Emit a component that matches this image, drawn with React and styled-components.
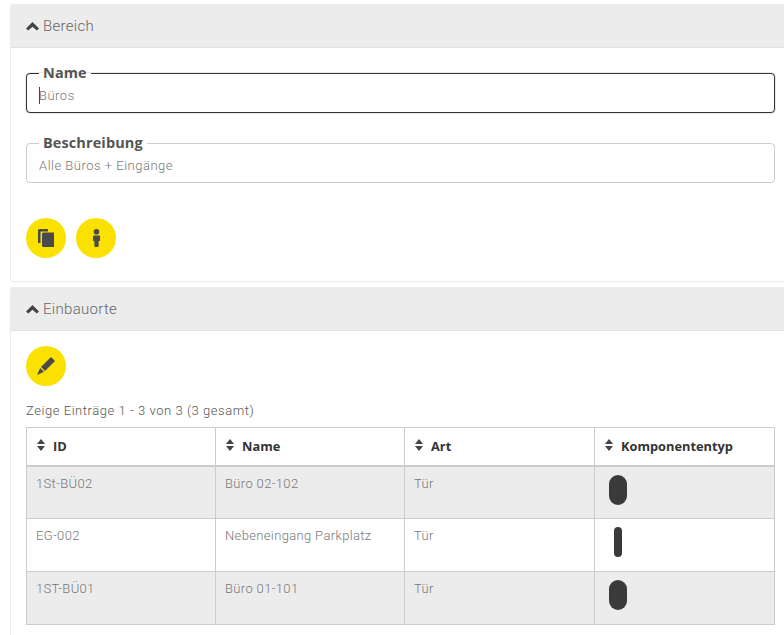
import React from 'react';
import styled, { createGlobalStyle } from 'styled-components';

const GlobalStyle = createGlobalStyle`
  html, body {
    margin: 0;
    padding: 0;
    background: #fff;
    overflow: hidden;
  }
  body {
    font-family: 'Roboto', 'Liberation Sans', sans-serif;
    font-weight: 300;
    color: #555;
  }
`;

const Page = styled.div`
  display: flex;
  flex-direction: column;
  gap: 5px;
  padding: 4px 0 0 10px;
  height: 631px;
  overflow: hidden;
`;

const Panel = styled.section`
  border: 1px solid #ececec;
  border-right: none;
  border-radius: 3px 0 0 3px;
  flex: none;
`;

const PanelHeader = styled.header`
  display: flex;
  align-items: center;
  gap: 4px;
  height: 43px;
  box-sizing: border-box;
  padding-left: 15px;
  background: #ececec;
  border-bottom: 1px solid #e0e0e0;
  font-size: 15px;
  letter-spacing: 0.3px;
  color: #666;
`;

const PanelBody = styled.div`
  padding: ${(props) => props.padding};
`;

const Field = styled.fieldset`
  margin: 0 0 ${(props) => props.bottom || 0}px;
  padding: 0 12px;
  height: 47px;
  box-sizing: border-box;
  border: 1px solid ${(props) => (props.focused ? '#333' : '#ccc')};
  border-radius: 4px;
  box-shadow: ${(props) => (props.focused ? '0 0 1px #333' : 'none')};
  display: flex;
  align-items: center;
`;

const Legend = styled.legend`
  margin-left: 0;
  padding: 0 4px;
  font-family: 'Open Sans', sans-serif;
  font-weight: 700;
  font-size: 14.5px;
  line-height: 14px;
  letter-spacing: 0.1px;
  color: #555;
`;

const Value = styled.span`
  position: relative;
  top: -1px;
  font-size: 13px;
  letter-spacing: 0.5px;
  color: #777;
`;

const Caret = styled.span`
  position: absolute;
  left: 0;
  top: -1px;
  width: 1px;
  height: 17px;
  background: #444;
`;

const ButtonRow = styled.div`
  display: flex;
  gap: 10px;
`;

const RoundButton = styled.button`
  display: flex;
  align-items: center;
  justify-content: center;
  width: 40px;
  height: 40px;
  padding: 0;
  border: none;
  border-radius: 50%;
  background: #fae100;
  color: #4a4a4a;
`;

const Summary = styled.div`
  margin: 17px 0 8px;
  font-size: 13px;
  line-height: 16px;
  letter-spacing: 0.55px;
  color: #555;
`;

const Table = styled.table`
  width: 748px;
  border-collapse: collapse;
  table-layout: fixed;
`;

const HeadCell = styled.th`
  height: 38px;
  padding: 0 10px;
  box-sizing: border-box;
  border: 1px solid #ccc;
  border-bottom: 2px solid #ccc;
  text-align: left;
  font-family: 'Open Sans', sans-serif;
  font-weight: 700;
  font-size: 12.8px;
  color: #333;
`;

const HeadInner = styled.span`
  display: flex;
  align-items: center;
  gap: 8px;

  svg {
    margin-top: -3px;
  }
`;

const Row = styled.tr`
  background: ${(props) => (props.striped ? '#ececec' : '#fff')};
`;

const Cell = styled.td`
  height: 53px;
  padding: 8px 9px 0;
  box-sizing: border-box;
  border: 1px solid #ccc;
  vertical-align: top;
  font-size: 13px;
  line-height: 18px;
  letter-spacing: 0.35px;
  color: #777;
`;

const Knob = styled.div`
  width: ${(props) => (props.slim ? 8 : 18)}px;
  height: 30px;
  margin-left: ${(props) => (props.slim ? 10 : 5)}px;
  border-radius: ${(props) => (props.slim ? 4 : 9)}px;
  background: #3a3a3a;
`;

const Chevron = () => (
  <svg width="13" height="9" viewBox="0 0 13 9">
    <path d="M6.5 0 L13 6.4 L10.8 8.6 L6.5 4.8 L2.2 8.6 L0 6.4 Z" fill="#444" />
  </svg>
);

const SortIcon = () => (
  <svg width="8" height="12" viewBox="0 0 8 12">
    <path d="M4 0 L8 5 L0 5 Z M0 7 L8 7 L4 12 Z" fill="#444" />
  </svg>
);

const CopyIcon = () => (
  <svg width="16" height="18" viewBox="0 0 16 18">
    <path d="M0 1.5 Q0 0 1.5 0 H10 V2.5 H3 Q2.5 2.5 2.5 3 V14 H0 Z" fill="currentColor" />
    <path d="M4 5 Q4 3.5 5.5 3.5 H16 V18 H5.5 Q4 18 4 16.5 Z" fill="currentColor" />
  </svg>
);

const InfoIcon = () => (
  <svg width="7" height="18" viewBox="0 0 7 18">
    <circle cx="3.5" cy="2.8" r="2.8" fill="currentColor" />
    <path d="M0.6 6.6 H6.4 Q7 6.6 7 7.2 V11.5 L5.6 12.6 V17 Q5.6 18 4.6 18 H2.4 Q1.4 18 1.4 17 V12.6 L0 11.5 V7.2 Q0 6.6 0.6 6.6 Z" fill="currentColor" />
  </svg>
);

const PencilIcon = () => (
  <svg width="18" height="18" viewBox="0 0 18 18">
    <path d="M14 0 L18 4 L8 14 L4 10 Z" fill="currentColor" />
    <path d="M3.2 11 L7 14.8 L0 18 Z" fill="currentColor" />
  </svg>
);

const columns = [
  { title: 'ID', width: 189 },
  { title: 'Name', width: 189 },
  { title: 'Art', width: 190 },
  { title: 'Komponententyp', width: 180 },
];

const rows = [
  { id: '1St-BÜ02', name: 'Büro 02-102', art: 'Tür', slim: false },
  { id: 'EG-002', name: 'Nebeneingang Parkplatz', art: 'Tür', slim: true },
  { id: '1ST-BÜ01', name: 'Büro 01-101', art: 'Tür', slim: false },
];

const App = () => (
  <Page>
    <GlobalStyle />
    <Panel>
      <PanelHeader>
        <Chevron />
        Bereich
      </PanelHeader>
      <PanelBody padding="18px 9px 23px 15px">
        <Field focused bottom={23}>
          <Legend>Name</Legend>
          <Value>
            <Caret />
            Büros
          </Value>
        </Field>
        <Field bottom={35}>
          <Legend>Beschreibung</Legend>
          <Value>Alle Büros + Eingänge</Value>
        </Field>
        <ButtonRow>
          <RoundButton><CopyIcon /></RoundButton>
          <RoundButton><InfoIcon /></RoundButton>
        </ButtonRow>
      </PanelBody>
    </Panel>
    <Panel>
      <PanelHeader>
        <Chevron />
        Einbauorte
      </PanelHeader>
      <PanelBody padding="15px 9px 30px 15px">
        <ButtonRow>
          <RoundButton><PencilIcon /></RoundButton>
        </ButtonRow>
        <Summary>Zeige Einträge 1 - 3 von 3 (3 gesamt)</Summary>
        <Table>
          <colgroup>
            {columns.map((col) => (
              <col key={col.title} width={col.width} />
            ))}
          </colgroup>
          <thead>
            <tr>
              {columns.map((col) => (
                <HeadCell key={col.title}>
                  <HeadInner>
                    <SortIcon />
                    {col.title}
                  </HeadInner>
                </HeadCell>
              ))}
            </tr>
          </thead>
          <tbody>
            {rows.map((row, i) => (
              <Row key={row.id} striped={i % 2 === 0}>
                <Cell>{row.id}</Cell>
                <Cell>{row.name}</Cell>
                <Cell>{row.art}</Cell>
                <Cell><Knob slim={row.slim} /></Cell>
              </Row>
            ))}
          </tbody>
        </Table>
      </PanelBody>
    </Panel>
  </Page>
);

export default App;
